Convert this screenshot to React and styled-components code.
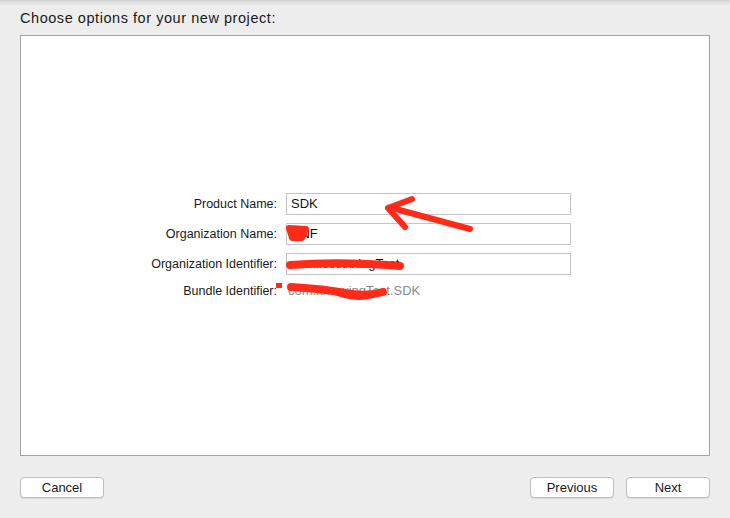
import React from "react";
import styled, { createGlobalStyle } from "styled-components";

const Global = createGlobalStyle`
  html, body { margin: 0; padding: 0; }
  body {
    background: #ededed;
    font-family: "Liberation Sans", Arial, sans-serif;
    -webkit-font-smoothing: antialiased;
  }
`;

const Page = styled.div`
  position: relative;
  width: 730px;
  height: 518px;
  box-sizing: border-box;
  display: flex;
  flex-direction: column;
  background: linear-gradient(to bottom, #cfcfcf 0px, #e4e4e4 3px, #ededed 6px);
  padding: 0 20px 20px 20px;
`;

const Title = styled.div`
  font-size: 14.5px;
  letter-spacing: 0.55px;
  color: #1a1a1a;
  height: 35px;
  line-height: 37px;
`;

const Panel = styled.div`
  flex: 1;
  background: #fff;
  border: 1px solid #a3a3a3;
  display: flex;
  align-items: center;
`;

const Form = styled.div`
  width: 100%;
  display: grid;
  grid-template-columns: 1fr 285px 129px;
  column-gap: 9px;
  row-gap: 8px;
  align-items: center;
`;

const Label = styled.div`
  grid-column: 1;
  text-align: right;
  font-size: 12.5px;
  color: #1a1a1a;
`;

const Field = styled.div`
  grid-column: 2;
  height: 22px;
  box-sizing: border-box;
  border: 1px solid #c4c4c4;
  font-size: 13px;
  line-height: 20px;
  padding-left: 4px;
  color: #111;
  background: #fff;
`;

const Plain = styled.div`
  grid-column: 2;
  font-size: 13px;
  color: #8a8a8a;
  height: 16px;
  line-height: 16px;
  padding-left: 2px;
`;

const Footer = styled.div`
  display: flex;
  align-items: center;
  gap: 12px;
  margin-top: 21px;
`;

const Spacer = styled.div`
  flex: 1;
`;

const Button = styled.div`
  width: 84px;
  height: 21px;
  box-sizing: border-box;
  border: 1px solid #bdbdbd;
  border-radius: 4px;
  background: #fff;
  box-shadow: 0 1px 0 rgba(0, 0, 0, 0.08);
  font-size: 13px;
  line-height: 19px;
  text-align: center;
  color: #1a1a1a;
`;

const Overlay = styled.svg`
  position: absolute;
  left: 0;
  top: 0;
  pointer-events: none;
`;

const fields = [
  { label: "Product Name:", value: "SDK" },
  { label: "Organization Name:", value: "NNF" },
  { label: "Organization Identifier:", value: "com.xxxxxxingTest" },
];

export default function App() {
  return (
    <>
      <Global />
      <Page>
        <Title>Choose options for your new project:</Title>
        <Panel>
          <Form>
            {fields.map((f) => (
              <React.Fragment key={f.label}>
                <Label>{f.label}</Label>
                <Field>{f.value}</Field>
                <div />
              </React.Fragment>
            ))}
            <Label>Bundle Identifier:</Label>
            <Plain>com.xxxxxingTest.SDK</Plain>
          </Form>
        </Panel>
        <Footer>
          <Button>Cancel</Button>
          <Spacer />
          <Button>Previous</Button>
          <Button>Next</Button>
        </Footer>
        <Overlay width="730" height="518" viewBox="0 0 730 518">
          <g fill="#ff2a17" stroke="#ff2a17" strokeLinecap="round" strokeLinejoin="round">
            <path d="M470 229 L392 208" strokeWidth="6" fill="none" />
            <path d="M388 208 L412 199 M388 208 L405 227" strokeWidth="6" fill="none" />
            <path d="M289 228 L306 229 L302 238 L292 238 Z" strokeWidth="6" />
            <path d="M290 265 Q340 261 400 266" strokeWidth="8" fill="none" />
            <rect x="276" y="283" width="6" height="5" stroke="none" />
            <path d="M291 287 Q325 289 345 293 Q365 297 383 292" strokeWidth="8" fill="none" />
            <path d="M335 292 Q355 300 372 295" strokeWidth="6" fill="none" />
          </g>
        </Overlay>
      </Page>
    </>
  );
}
